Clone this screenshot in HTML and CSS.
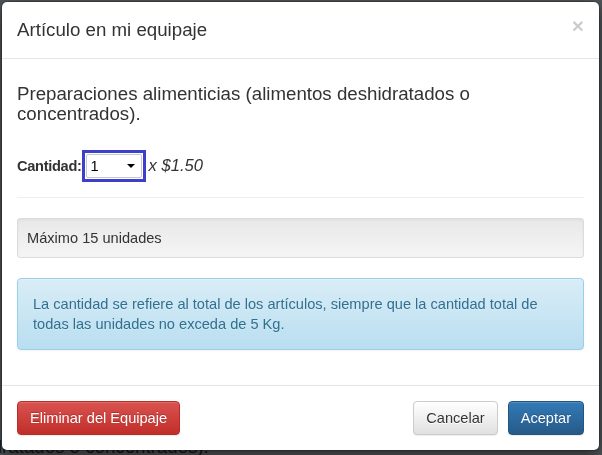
FILE: index.html
```html
<!DOCTYPE html>
<html lang="es">
<head>
    <meta charset="UTF-8">
    <meta name="viewport" content="width=device-width, initial-scale=1.0">
    <title>Artículo en mi equipaje</title>
    <link rel="stylesheet" href="styles.css">
</head>
<body>
    <!-- Página de fondo, tapada por el modal -->
    <div class="page">
        <h4 class="page-text">deshidratados o concentrados).</h4>
    </div>

    <!-- Modal -->
    <div class="modal">
        <div class="modal-content">
            <div class="modal-header">
                <button class="close" type="button">&times;</button>
                <h4 class="modal-title">Artículo en mi equipaje</h4>
            </div>

            <div class="modal-body">
                <h4 class="item-name">Preparaciones alimenticias (alimentos deshidratados o concentrados).</h4>

                <div class="qty-row">
                    <span class="qty-label">Cantidad:</span>
                    <span class="qty-focus">
                        <span class="qty-select">
                            <span class="qty-value">1</span>
                            <span class="caret"></span>
                        </span>
                    </span>
                    <span class="qty-price">x $1.50</span>
                </div>

                <hr>

                <div class="well">Máximo 15 unidades</div>

                <div class="alert-info">La cantidad se refiere al total de los artículos, siempre que la cantidad total de todas las unidades no exceda de 5 Kg.</div>
            </div>

            <div class="modal-footer">
                <button class="btn btn-danger" type="button">Eliminar del Equipaje</button>
                <div class="footer-right">
                    <button class="btn btn-default" type="button">Cancelar</button>
                    <button class="btn btn-primary" type="button">Aceptar</button>
                </div>
            </div>
        </div>
    </div>
</body>
</html>
```

FILE: styles.css
```css
body {
    margin: 0;
    padding: 0;
    background-color: #51565a; /* fondo oscurecido por el modal */
    font-family: "Liberation Sans", Arial, sans-serif;
    font-size: 14.6px;
    line-height: 20px;
    color: #333;
    overflow: hidden;
}

.page {
    height: 455px;
    position: relative;
}

.page-text {
    position: absolute;
    top: 437px;
    left: -53px;
    margin: 0;
    font-size: 18.7px;
    font-weight: 500;
    line-height: 20px;
    color: #161819;
    white-space: nowrap;
}

/* Modal */
.modal {
    position: fixed;
    top: 1px;
    left: 1px;
    width: 599px;
    z-index: 100;
}

.modal-content {
    background-color: #fff;
    border: 1px solid rgba(0, 0, 0, 0.2);
    border-radius: 6px;
    box-shadow: 0 5px 15px rgba(0, 0, 0, 0.5);
    background-clip: padding-box;
}

.modal-header {
    padding: 15px;
    border-bottom: 1px solid #e5e5e5;
}

.modal-title {
    margin: 0;
    font-size: 18.7px;
    font-weight: 500;
    line-height: 26px;
}

.close {
    float: right;
    margin-top: -2px;
    padding: 0;
    border: 0;
    background: transparent;
    font-family: inherit;
    font-size: 21px;
    font-weight: 700;
    line-height: 1;
    color: #000;
    opacity: 0.2;
    cursor: pointer;
}

.modal-body {
    padding: 15px;
}

.item-name {
    margin: 10px 0 10px 0;
    font-size: 18.7px;
    font-weight: 500;
    line-height: 20px;
}

/* Fila de cantidad */
.qty-row {
    display: flex;
    align-items: center;
    margin-top: 26px;
}

.qty-label {
    font-weight: 700;
    color: #333;
    letter-spacing: -0.3px;
}

.qty-focus {
    display: flex;
    flex-shrink: 0;
    border: 3px solid #3b3fc9;
    padding: 1px;
}

.qty-select {
    display: flex;
    align-items: center;
    justify-content: space-between;
    box-sizing: border-box;
    width: 56px;
    height: 24px;
    padding: 0 6px 0 4px;
    border: 1px solid #c8c8c8;
    border-radius: 2px;
    background-color: #fff;
    color: #000;
}

.caret {
    width: 0;
    height: 0;
    border-left: 4px solid transparent;
    border-right: 4px solid transparent;
    border-top: 4px solid #000;
}

.qty-price {
    margin-left: 3px;
    font-size: 16.6px;
    font-style: italic;
    color: #333;
}

hr {
    margin: 15px 0 20px 0;
    border: 0;
    border-top: 1px solid #eee;
}

.well {
    padding: 9px;
    margin-bottom: 20px;
    border: 1px solid #dcdcdc;
    border-radius: 3px;
    background-image: linear-gradient(to bottom, #e8e8e8 0%, #f5f5f5 100%);
    box-shadow: inset 0 1px 3px rgba(0, 0, 0, 0.05), 0 1px 0 rgba(255, 255, 255, 0.1);
    color: #333;
}

.alert-info {
    padding: 15px;
    margin-bottom: 20px;
    border: 1px solid #9acfea;
    border-radius: 4px;
    background-image: linear-gradient(to bottom, #d9edf7 0%, #b9def0 100%);
    box-shadow: inset 0 1px 0 rgba(255, 255, 255, 0.25), 0 1px 2px rgba(0, 0, 0, 0.05);
    color: #31708f;
    text-shadow: 0 1px 0 rgba(255, 255, 255, 0.2);
}

/* Pie del modal */
.modal-footer {
    display: flex;
    justify-content: space-between;
    padding: 15px;
    border-top: 1px solid #e5e5e5;
}

.footer-right {
    display: flex;
    gap: 10px;
}

.btn {
    padding: 6px 12px;
    font-family: inherit;
    font-size: 14.6px;
    line-height: 20px;
    border: 1px solid transparent;
    border-radius: 4px;
    cursor: pointer;
    box-shadow: inset 0 1px 0 rgba(255, 255, 255, 0.15), 0 1px 1px rgba(0, 0, 0, 0.075);
}

.btn-danger {
    color: #fff;
    background-image: linear-gradient(to bottom, #d9534f 0%, #c12e2a 100%);
    border-color: #b92c28;
    text-shadow: 0 -1px 0 rgba(0, 0, 0, 0.2);
}

.btn-default {
    color: #333;
    background-image: linear-gradient(to bottom, #fff 0%, #e0e0e0 100%);
    border-color: #ccc;
    text-shadow: 0 1px 0 #fff;
}

.btn-primary {
    color: #fff;
    background-image: linear-gradient(to bottom, #337ab7 0%, #265a88 100%);
    border-color: #245580;
    text-shadow: 0 -1px 0 rgba(0, 0, 0, 0.2);
}
```
